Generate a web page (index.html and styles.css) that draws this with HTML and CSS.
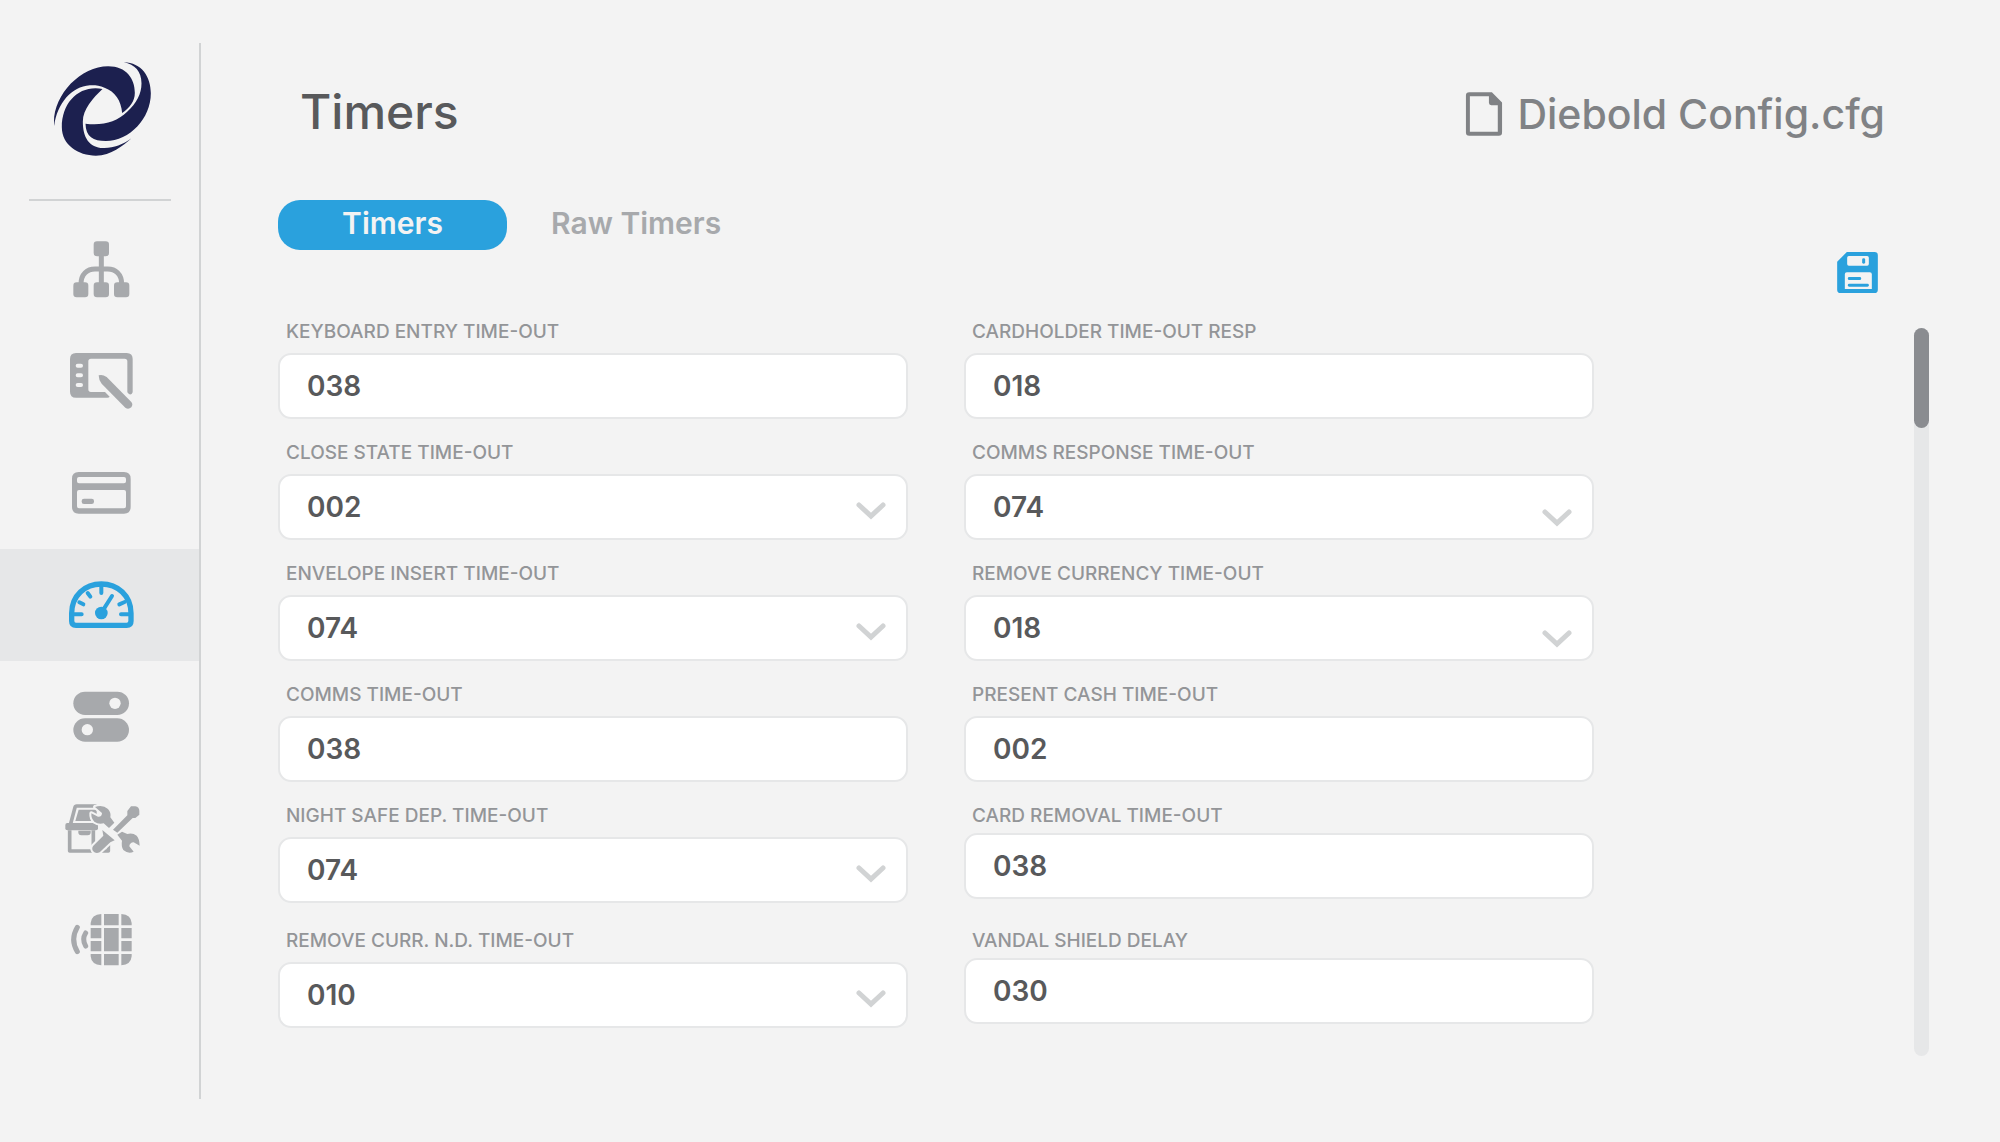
FILE: index.html
```html
<!DOCTYPE html>
<html lang="en">
<head>
    <meta charset="UTF-8">
    <meta name="viewport" content="width=device-width, initial-scale=1.0">
    <title>Timers</title>
    <link rel="stylesheet" href="styles.css">
</head>
<body>
    <div class="page">
        <aside class="sidebar">
            <a href="#" class="logo" aria-label="Home">
                <svg viewBox="160 93 296 288" width="99" height="96">
                    <path d="M163 288C155 200 240 109 325 109C380 109 405 147 405 188C405 214 390 232 367 249C364 212 346 184 314 173C298 166 282 165 270 166C215 170 172 220 163 288Z"/>
                    <path d="M308 177C240 164 186 215 186 292C186 345 235 377 288 377C335 377 368 348 395 325C368 345 340 355 310 354C268 353 249 322 249 275C249 238 280 203 308 177Z"/>
                    <path d="M372 97C425 98 453 140 453 190C453 265 390 333 318 333C280 333 258 320 257 281C310 287 350 276 382 245C410 220 425 192 425 160C425 125 405 103 372 97Z"/>
                </svg>
            </a>
            <hr class="divider">
            <nav class="menu">
                <a href="#" class="menu-item" aria-label="Network">
                    <svg viewBox="-15 0 330 300" width="110" height="100">
                        <rect x="131" y="67" width="46" height="45" rx="10"/>
                        <rect x="70" y="190" width="45" height="45" rx="10"/>
                        <rect x="131" y="190" width="46" height="45" rx="10"/>
                        <rect x="192" y="190" width="46" height="45" rx="10"/>
                        <path class="line" stroke-width="15" d="M154 105V195M93 195C93 165 112 150 135 150H173C196 150 215 165 215 195"/>
                    </svg>
                </a>
                <a href="#" class="menu-item" aria-label="Screens">
                    <svg viewBox="-15 336 330 300" width="110" height="100">
                        <path fill-rule="evenodd" d="M78 402H230Q248 402 248 420V520Q242 533 232 520V427Q232 419 224 419H123Q115 419 115 427V511Q115 519 123 519H165L179 533Q177 536 172 536H78Q60 536 60 518V420Q60 402 78 402ZM83 434a6 6 0 0 0 0 12h10a6 6 0 0 0 0-12ZM83 463a6 6 0 0 0 0 12h10a6 6 0 0 0 0-12ZM83 492a6 6 0 0 0 0 12h10a6 6 0 0 0 0-12Z"/>
                        <path d="M146 469Q157 465 170 474L244 549Q250 556 244 565Q235 573 226 566L155 494Q146 483 146 469Z"/>
                    </svg>
                </a>
                <a href="#" class="menu-item" aria-label="Cards">
                    <svg viewBox="-15 -18 330 300" width="110" height="100">
                        <path fill-rule="evenodd" d="M86 69H222Q242 69 242 89V174Q242 194 222 194H86Q66 194 66 174V89Q66 69 86 69ZM87 84Q81 84 81 90V97Q81 103 87 103H222Q228 103 228 97V90Q228 84 222 84ZM87 123Q81 123 81 129V172Q81 178 87 178H222Q228 178 228 172V129Q228 123 222 123Z"/>
                        <rect x="95" y="149" width="37" height="16" rx="7"/>
                    </svg>
                </a>
                <a href="#" class="menu-item active" aria-label="Timers">
                    <svg viewBox="-15 318 330 300" width="110" height="100">
                        <path class="line" stroke-width="16" d="M65 493C65 440 105 405 154 405C203 405 243 440 243 493V516Q243 529 230 529H78Q65 529 65 516Z"/>
                        <path class="line" stroke-width="12" stroke-linecap="round" d="M154 410V432M113 432L121 443M88 460L100 466M72 496H95M237 496H213M224 459L208 466M186 441L160 482"/>
                        <circle cx="154" cy="492" r="19"/>
                    </svg>
                </a>
                <a href="#" class="menu-item" aria-label="Options">
                    <svg viewBox="-15 -6 330 300" width="110" height="100">
                        <rect x="70" y="68" width="167" height="70" rx="35"/>
                        <rect x="70" y="148" width="167" height="70" rx="35"/>
                        <circle class="hole" cx="195" cy="103" r="17"/>
                        <circle class="hole" cx="112" cy="182" r="17"/>
                    </svg>
                </a>
                <a href="#" class="menu-item" aria-label="Tools">
                    <svg viewBox="-15 0 330 300" width="110" height="100">
                        <path class="line" stroke-width="11" stroke-linejoin="round" d="M59 154V216H175V190M130 154V216M140 81H80Q76 81 75 85L62 134"/>
                        <path d="M86 92H140V126H76Z"/>
                        <rect x="46" y="132" width="98" height="22" rx="6"/>
                        <path d="M85 155H122V160Q122 169 113 169H94Q85 169 85 160Z"/>
                        <path class="cut" d="M135 84Q158 76 174 90Q184 101 181 115L193 131L177 147L161 133Q145 137 133 128Q123 118 124 103L144 113Q156 114 156 102L136 85ZM243 82H256Q268 84 268 96V107L256 117H248L202 161L189 152L232 109V96ZM157 153L194 184L181 190L149 220Q137 226 129 216Q124 207 130 200L160 170ZM202 167L216 158L232 165Q248 161 260 170Q268 178 269 200L251 190Q239 191 238 202L251 218Q235 226 220 213Q213 202 216 185Z"/>
                    </svg>
                </a>
                <a href="#" class="menu-item" aria-label="Chip">
                    <svg viewBox="-15 336 330 300" width="110" height="100">
                        <path d="M154 405V439H122V432Q124 407 154 405ZM162 405H206V439H162ZM214 405Q243 407 245 432V439H214ZM122 447H154V478H122ZM162 447H206V517H162ZM214 447H245V478H214ZM122 486H154V517H122ZM214 486H245V517H214ZM122 525H154V559Q124 557 122 532ZM162 525H206V559H162ZM214 525H245V532Q243 557 214 559Z"/>
                        <path class="line" stroke-width="15" stroke-linecap="round" d="M82 445Q60 482 82 518M107 462Q95 481 107 501"/>
                    </svg>
                </a>
            </nav>
        </aside>

        <main class="content">
            <header class="header">
                <h1>Timers</h1>
                <div class="file">
                    <svg viewBox="70 66 114 134" width="38" height="44">
                        <path fill-rule="evenodd" d="M80 67H151L182 98V189Q182 199 172 199H82Q72 199 72 189V77Q72 67 82 67ZM84 79V187H169V106H149Q142 106 142 99V79Z"/>
                    </svg>
                    <span>Diebold Config.cfg</span>
                </div>
            </header>

            <div class="tabs">
                <button type="button" class="tab active">Timers</button>
                <button type="button" class="tab">Raw Timers</button>
            </div>

            <div class="actions">
                <button type="submit" form="timers-form" class="save" aria-label="Save">
                    <svg viewBox="1191 546 122 123" width="41" height="41">
                        <path fill-rule="evenodd" d="M1220 546H1303Q1313 546 1313 556V659Q1313 669 1303 669H1201Q1191 669 1191 659V575ZM1226 558Q1221 558 1221 563V582Q1221 587 1226 587H1281Q1286 587 1286 582V563Q1286 558 1281 558ZM1220 607Q1214 607 1214 613V657H1295V613Q1295 607 1289 607Z"/>
                        <rect x="1266" y="565" width="9" height="16" rx="4"/>
                        <rect x="1223" y="621" width="40" height="9" rx="4"/>
                        <rect x="1223" y="641" width="63" height="9" rx="4"/>
                    </svg>
                </button>
            </div>

            <div class="scroll-area">
                <form id="timers-form" class="fields">
                    <div class="field">
                        <label for="keyboard-entry">KEYBOARD ENTRY TIME-OUT</label>
                        <input type="text" id="keyboard-entry" value="038">
                    </div>
                    <div class="field">
                        <label for="cardholder">CARDHOLDER TIME-OUT RESP</label>
                        <input type="text" id="cardholder" value="018">
                    </div>
                    <div class="field">
                        <label for="close-state">CLOSE STATE TIME-OUT</label>
                        <select id="close-state"><option>002</option></select>
                    </div>
                    <div class="field">
                        <label for="comms-response">COMMS RESPONSE TIME-OUT</label>
                        <select id="comms-response" class="low-arrow"><option>074</option></select>
                    </div>
                    <div class="field">
                        <label for="envelope-insert">ENVELOPE INSERT TIME-OUT</label>
                        <select id="envelope-insert"><option>074</option></select>
                    </div>
                    <div class="field">
                        <label for="remove-currency">REMOVE CURRENCY TIME-OUT</label>
                        <select id="remove-currency" class="low-arrow"><option>018</option></select>
                    </div>
                    <div class="field">
                        <label for="comms">COMMS TIME-OUT</label>
                        <input type="text" id="comms" value="038">
                    </div>
                    <div class="field">
                        <label for="present-cash">PRESENT CASH TIME-OUT</label>
                        <input type="text" id="present-cash" value="002">
                    </div>
                    <div class="field">
                        <label for="night-safe">NIGHT SAFE DEP. TIME-OUT</label>
                        <select id="night-safe"><option>074</option></select>
                    </div>
                    <div class="field tight">
                        <label for="card-removal">CARD REMOVAL TIME-OUT</label>
                        <input type="text" id="card-removal" value="038">
                    </div>
                    <div class="field last">
                        <label for="remove-curr-nd">REMOVE CURR. N.D. TIME-OUT</label>
                        <select id="remove-curr-nd"><option>010</option></select>
                    </div>
                    <div class="field last tight">
                        <label for="vandal-shield">VANDAL SHIELD DELAY</label>
                        <input type="text" id="vandal-shield" value="030">
                    </div>
                </form>
                <div class="scrollbar">
                    <div class="thumb"></div>
                </div>
            </div>
        </main>
    </div>
</body>
</html>
```
FILE: styles.css
```css
* {
    box-sizing: border-box;
}
body {
    margin: 0;
    font-family: Inter, "Open Sans", sans-serif;
    background-color: #f3f3f3;
    color: #58595b;
}
svg {
    display: block;
    fill: currentColor;
}
.page {
    display: flex;
    min-height: 100vh;
}

/* sidebar */
.sidebar {
    flex: 0 0 201px;
    margin: 43px 0;
    border-right: 2px solid #d1d3d4;
}
.logo {
    display: flex;
    justify-content: center;
    padding: 18px 0 42px 6px;
    color: #1c204f;
}
.divider {
    width: 142px;
    height: 2px;
    margin: 0 auto 12px;
    border: none;
    background-color: #d1d3d4;
}
.menu-item {
    display: flex;
    align-items: center;
    justify-content: center;
    height: 112px;
    color: #a7a9ac;
}
.menu-item.active {
    color: #2aa1dd;
    background-color: #e6e7e8;
}
.line {
    fill: none;
    stroke: currentColor;
}
.hole {
    fill: #f3f3f3;
}
.cut {
    stroke: #f3f3f3;
    stroke-width: 12px;
    stroke-linejoin: round;
    paint-order: stroke;
}

/* main part */
.content {
    flex: 1;
    min-width: 0;
    padding: 80px 71px 86px 77px;
}
.header {
    display: flex;
    justify-content: space-between;
    padding: 0 44px 0 22px;
}
h1 {
    margin: 0;
    font-size: 48px;
    font-weight: 500;
    line-height: 64px;
}
.file {
    display: flex;
    align-items: center;
    gap: 14px;
    padding: 2px 0;
    font-size: 41px;
    font-weight: 500;
    line-height: 64px;
    color: #808285;
}
.tabs {
    display: flex;
    gap: 44px;
    margin-top: 52px;
}
.tab {
    height: 50px;
    padding: 0 0 4px;
    border: none;
    background: none;
    font-family: inherit;
    font-size: 30px;
    font-weight: 600;
    color: #a7a9ac;
    cursor: pointer;
}
.tab.active {
    width: 229px;
    border-radius: 22px;
    background-color: #2aa1dd;
    color: #f3f3f3;
}
.actions {
    display: flex;
    justify-content: flex-end;
    padding: 2px 51px 0 0;
}
.save {
    padding: 0;
    border: none;
    background: none;
    color: #2aa1dd;
    cursor: pointer;
}
.scroll-area {
    display: flex;
    gap: 320px;
    margin-top: 24px;
}
.fields {
    flex: 1;
    display: grid;
    grid-template-columns: 1fr 1fr;
    align-items: start;
    gap: 19px 56px;
    padding-bottom: 28px;
}
.field {
    display: flex;
    flex-direction: column;
    gap: 6px;
}
.field.tight {
    gap: 2px;
}
.field.last {
    padding-top: 4px;
}
label {
    padding-left: 8px;
    font-size: 19px;
    font-weight: 500;
    line-height: 30px;
    color: #939598;
}
input, select {
    width: 100%;
    height: 66px;
    padding: 0 27px;
    border: 2px solid #e6e7e8;
    border-radius: 13px;
    background-color: white;
    font-family: inherit;
    font-size: 28px;
    font-weight: 600;
    color: #58595b;
}
select {
    appearance: none;
    background-image: url("data:image/svg+xml,%3Csvg xmlns='http://www.w3.org/2000/svg' width='30' height='20'%3E%3Cpath d='M3 4L15 15L27 4' fill='none' stroke='%23d1d3d4' stroke-width='5' stroke-linecap='round'/%3E%3C/svg%3E");
    background-repeat: no-repeat;
    background-position: right 20px top 25px;
}
select.low-arrow {
    background-position: right 20px top 32px;
}
.scrollbar {
    width: 15px;
    margin-top: 11px;
    border-radius: 8px;
    background-color: #e6e7e8;
}
.thumb {
    height: 100px;
    border-radius: 8px;
    background-color: #8a8c90;
}
```
